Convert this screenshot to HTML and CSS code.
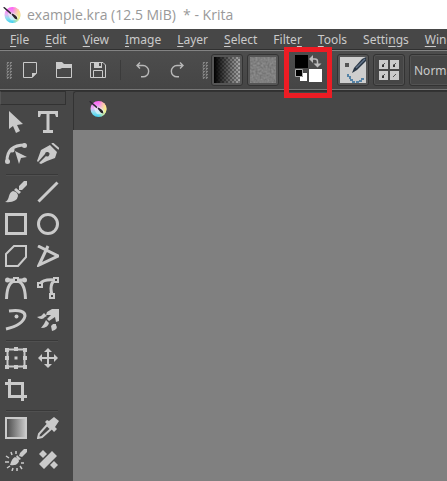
FILE: index.html
```html
<!DOCTYPE html>
<html lang="en">
<head>
<meta charset="utf-8">
<title>example.kra (12.5 MiB) * - Krita</title>
<link rel="stylesheet" href="styles.css">
</head>
<body>
<svg class="defs" aria-hidden="true">
  <defs>
    <linearGradient id="pinkCyan" x1="0" y1="0" x2="0" y2="1"><stop offset="0" stop-color="#ff5cf4"/><stop offset=".45" stop-color="#e8b4f4"/><stop offset=".7" stop-color="#8fe0f0"/><stop offset="1" stop-color="#3ccff0"/></linearGradient>
    <linearGradient id="yellow" x1="0" y1="0" x2="1" y2="0"><stop offset=".5" stop-color="#fff27a" stop-opacity="0"/><stop offset="1" stop-color="#fff27a"/></linearGradient>
    <linearGradient id="fade"><stop offset="0" stop-color="#474747"/><stop offset="1" stop-color="#cacaca"/></linearGradient>
    <symbol id="krita" viewBox="0 0 18 18">
      <circle cx="9.500" cy="9" r="8" fill="url(#pinkCyan)"/>
      <circle cx="9.500" cy="9" r="8" fill="url(#yellow)"/>
      <path d="M5 5.500Q11 6 15.500 11Q13 15 8 14Q5 11 5 5.500Z" fill="#fff" opacity=".5"/>
      <path d="M0 1.500L1.500 1L8.500 7L7.500 8.200Z" fill="#2b2630"/>
      <path d="M8.500 8.500L9.500 7.500L12.500 9.500Q14.500 10.500 14.300 13.500Q11.500 13.300 10.500 11Z" fill="#28232c"/>
    </symbol>
  </defs>
</svg>
<div class="window">
  <header class="titlebar">
    <svg class="logo"><use href="#krita"/></svg>
    <h1>example.kra (12.5 MiB)&nbsp; * - Krita</h1>
  </header>
  <nav class="menubar" aria-label="Main menu">
    <button><u>F</u>ile</button><button><u>E</u>dit</button><button><u>V</u>iew</button><button><u>I</u>mage</button><button><u>L</u>ayer</button><button><u>S</u>elect</button><button>Filte<u>r</u></button><button><u>T</u>ools</button><button>Setti<u>n</u>gs</button><button><u>W</u>indow</button>
  </nav>
  <div class="toolbar" role="toolbar" aria-label="Main toolbar">
    <span class="grip"></span>
    <button class="action" aria-label="New"><svg viewBox="0 0 16 16"><path d="M1.500.5H14.500V11L10 15.500H1.500Z" class="thin"/><path d="M10 16V11H15Z"/></svg></button>
    <button class="action" aria-label="Open"><svg viewBox="0 0 16 16"><path d="M0 0H6L8 2H16V6H6L4 7H0Z"/><path d="M.5 5V15.500H15.500V5" class="thin"/></svg></button>
    <button class="action" aria-label="Save"><svg viewBox="0 0 16 16"><path d="M.5.500H13L15.500 3V15.500H.5ZM3.500 15V8.500H12.500V15" class="thin"/><path d="M4 0H12V6H4ZM9 1V4H11V1Z" fill-rule="evenodd"/></svg></button>
    <span class="divider"></span>
    <button class="action" aria-label="Undo"><svg viewBox="0 0 16 16"><path d="M5 .5L2 3.500L5 6.500M2 3.500H8A5.500 5.500 0 0 1 8 14.800H6" class="curve"/></svg></button>
    <button class="action" aria-label="Redo"><svg viewBox="0 0 16 16"><path d="M11 .5L14 3.500L11 6.500M14 3.500H8A5.500 5.500 0 0 0 8 14.800H10" class="curve"/></svg></button>
    <span class="grip"></span>
    <button class="chooser" aria-label="Gradient"><span class="swatch gradient"></span></button>
    <button class="chooser" aria-label="Pattern"><svg viewBox="0 0 26 26"><filter id="noise" color-interpolation-filters="sRGB"><feTurbulence type="fractalNoise" baseFrequency=".5" numOctaves="2" seed="4"/><feColorMatrix values=".2 0 0 0 .4 .2 0 0 0 .4 .2 0 0 0 .4 0 0 0 0 1"/></filter><rect width="26" height="26" fill="#808080" filter="url(#noise)"/></svg></button>
    <div class="colors">
      <button aria-label="Foreground and background colors"><svg viewBox="0 0 28 28"><path d="M1 1H14V14H1Z" fill="#000"/><path d="M15 15H28V28H15Z" fill="#fff"/><path d="M9 19H13V27H6V23H9Z" fill="#fff"/><path d="M1.500 15.500H8.500V22.500H1.500Z" fill="#000" stroke="#aaa"/><path d="M18 5H21Q23.500 5 23.500 7.500V10" class="swap"/><path d="M15 5L19 1V9ZM19.500 9.500H27.500L23.500 13.500Z" class="light"/></svg></button>
      <span class="highlight"></span>
    </div>
    <button class="chooser" aria-label="Brush preset"><svg viewBox="0 0 26 26"><path d="M0 0H26V26H0Z" fill="#cecece"/><path d="M5 6H9V10H5Z" fill="#555"/><path d="M12 16L14 11L22 2L26 0V4L17 13Z" fill="#273443"/><path d="M16 11L25 2" stroke="#64748a" stroke-width="1.500"/><path d="M8 17V20H10V23H13V25H18V24H21V22H24" fill="none" stroke="#5683a6" stroke-width="2" stroke-dasharray="3 1"/></svg></button>
    <button class="chooser dark" aria-label="Choose brush preset"><svg viewBox="0 0 26 26"><path d="M3 3H12V12H3ZM14 3H23V12H14ZM3 14H12V23H3ZM14 14H23V23H14Z"/><path d="M6 9L9 6M17 9L20 6M6 20L9 17M17 20L20 17" stroke="#555" stroke-width="1"/><path d="M6 7.500H8V10H6ZM17 7.500H19V10H17ZM6 18.500H8V21H6Z" fill="#333"/></svg></button>
    <select class="blend" aria-label="Blending mode"><option>Normal</option></select>
  </div>
  <main class="workspace">
    <aside class="dock">
      <div class="dock-title"></div>
      <div class="tools">
        <button aria-label="Select shapes"><svg viewBox="0 0 22 22"><path d="M4 0L18 13L12 14L15 20L11 22L8 15L4 18Z"/></svg></button>
        <button aria-label="Text"><svg viewBox="0 0 22 22"><path d="M1 0H21V6H19L18 3H12.500V19H16V22H6V19H9.500V3H4L3 6H1Z"/></svg></button>
        <button aria-label="Edit shapes"><svg viewBox="0 0 22 22"><path d="M2 18Q2 2 20 2" class="stroke"/><circle cx="2.500" cy="18.500" r="2.500"/><circle cx="19.500" cy="2.500" r="2.500"/><circle cx="7" cy="7" r="2.500"/><path d="M10 8L22 14L16 15L14 21Z"/></svg></button>
        <button aria-label="Calligraphy"><svg viewBox="0 0 22 22"><path d="M13 2L20 9L18 15L10 18L4 21L2 20L9 13A2.200 2.200 0 1 0 8 11L1 19L0 18L4 7Z"/><path d="M15 0L22 6" class="line"/></svg></button>
      </div>
      <hr>
      <div class="tools">
        <button aria-label="Freehand brush"><svg viewBox="0 0 22 22"><path d="M14 5L19 0H22V4L17 9L14 9ZM11 7L16 11L14 13L9 9ZM8 10Q13 11 13 15Q12 22 0 21Q3 20 4 15Q5 11 8 10Z"/></svg></button>
        <button aria-label="Line"><svg viewBox="0 0 22 22"><path d="M1.500 20.500L20.500 1.500" class="stroke"/></svg></button>
        <button aria-label="Rectangle"><svg viewBox="0 0 22 22"><path d="M1.500 1.500H20.500V20.500H1.500Z" class="stroke"/></svg></button>
        <button aria-label="Ellipse"><svg viewBox="0 0 22 22"><circle cx="11" cy="11" r="9.500" class="stroke"/></svg></button>
        <button aria-label="Polygon"><svg viewBox="0 0 22 22"><path d="M1 9L9 1H21V12L13 21H1Z" class="line"/></svg></button>
        <button aria-label="Polyline"><svg viewBox="0 0 22 22"><path d="M1 1L21 11L2 20L11 1" class="stroke"/></svg></button>
        <button aria-label="Bezier curve"><svg viewBox="0 0 22 22"><path d="M1.500 22Q2 4 11 4Q20 4 20.500 22M2 3H20" class="stroke"/><circle cx="2.500" cy="3" r="2.500"/><circle cx="19.500" cy="3" r="2.500"/><path d="M9 1H13V5H9Z" class="node"/></svg></button>
        <button aria-label="Freehand path"><svg viewBox="0 0 22 22"><path d="M3 7Q6 2 18 3Q12 7 15 18" class="stroke"/><path d="M1 6H5V10H1ZM17 1H21V5H17ZM13 17H17V21H13Z" class="node"/></svg></button>
        <button aria-label="Dynamic brush"><svg viewBox="0 0 22 22"><path d="M4 2Q20 0 20 7Q18 16 1 20" class="stroke"/><circle cx="11.500" cy="7.500" r="2"/></svg></button>
        <button aria-label="Multibrush"><svg viewBox="0 0 22 22"><path d="M10 3L15 0H22V12L19 13L18 8L12 12L10 10L14 6L9 6Z"/><path d="M7 4L10 7L8 8Q5 12 0 8L4 7ZM9 11L12 14Q11 19 4 19L7 15ZM16 15H19V16Q22 20 15 22L14 17Z"/></svg></button>
      </div>
      <hr>
      <div class="tools">
        <button aria-label="Transform"><svg viewBox="0 0 22 22"><path d="M2.500 2.500H19.500V19.500H2.500Z" class="line"/><path d="M0 1H4V5H0ZM18 1H22V5H18ZM0 18H4V22H0ZM18 18H22V22H18ZM9 0H13V4H9ZM9 18H13V22H9ZM0 9H4V13H0ZM18 9H22V13H18ZM9.500 9.500H12.500V12.500H9.500Z"/></svg></button>
        <button aria-label="Move"><svg viewBox="0 0 22 22"><path d="M11 3V19M3 11H19" class="line"/><path d="M11 1L15 5H7ZM11 21L7 17H15ZM1 11L5 7V15ZM21 11L17 15V7Z"/></svg></button>
        <button aria-label="Crop"><svg viewBox="0 0 22 22"><path d="M4.500 0V17.500H22M0 4.500H17.500V22" class="stroke"/></svg></button>
      </div>
      <hr>
      <div class="tools">
        <button aria-label="Gradient tool"><svg viewBox="0 0 22 22"><path d="M1 1H21V21H1Z" fill="url(#fade)" stroke="#cacaca" stroke-width="2"/></svg></button>
        <button aria-label="Color sampler"><svg viewBox="0 0 22 22"><path d="M12 4L17 0L22 4L18 10L20 12L17 15L8 5L10 3Z"/><path d="M10 8L14 12L5 20L1 21L2 17Z" class="line"/></svg></button>
        <button aria-label="Colorize mask"><svg viewBox="0 0 22 22"><path d="M15 4L19 0H22V3L17 8L14 7ZM12 6L16 10L14 11L11 8ZM10 8Q16 11 13 14Q11 17 5 16Q7 9 10 8Z"/><path d="M0 13H4M1 7L4 9M6 3L7 6M11 2V5M2 19L5 17M7 22L8 19M12 22V19M17 20L15 17M19 14H16" class="ray"/></svg></button>
        <button aria-label="Smart patch"><svg viewBox="0 0 22 22"><path d="M15 2L20 7L7 20L2 15ZM2 5L6 1L10 5L6 9ZM13 16L17 12L21 16L17 20Z"/></svg></button>
      </div>
    </aside>
    <section class="document" aria-label="Document">
      <div class="tabs"><button class="tab" aria-label="example.kra"><svg class="logo"><use href="#krita"/></svg></button></div>
      <div class="canvas"></div>
    </section>
  </main>
</div>
</body>
</html>
```
FILE: styles.css
```css
* { box-sizing: border-box; }
body { margin: 0; background: #474747; font-family: "Noto Sans", sans-serif; font-size: 12px; color: #cacaca; }
button { margin: 0; padding: 0; border: 0; background: none; color: inherit; font: inherit; }
svg { display: block; fill: #cacaca; }
.defs { position: absolute; width: 0; height: 0; }
.window { display: flex; flex-direction: column; min-height: 100vh; overflow: hidden; }
.titlebar { display: flex; align-items: center; gap: 6px; height: 29px; padding: 0 3px; background: #fff; }
.logo { width: 18px; height: 18px; flex: none; }
.titlebar h1 { margin: 0; color: #999; font: 14px/20px "Open Sans", sans-serif; white-space: nowrap; }
.menubar { display: flex; height: 21px; padding: 0 2px; }
.menubar button { flex: none; padding: 0 8px; line-height: 20px; }
.menubar u { text-underline-offset: 2px; text-decoration-skip-ink: none; }
.toolbar { display: flex; align-items: center; height: 40px; padding-left: 6px; border-top: 1px solid #838383; border-bottom: 1px solid #777; box-shadow: 0 -1px #303030, 0 1px #303030; background: linear-gradient(#4d4d4d, #454545); }
.toolbar > * { flex: none; }
.grip { width: 6px; height: 17px; margin-right: 1px; background: conic-gradient(#858585 25%, #505050 0 50%, #606060 0 75%, #505050 0) 0 0 / 3px 3px; }
.action { width: 34px; height: 32px; }
.action svg { width: 16px; height: 16px; margin: auto; }
.divider { width: 1px; height: 20px; margin: 0 5px; background: #3b3b3b; }
.action + .grip { margin: 0 3px 0 8px; }
.thin { fill: none; stroke: #cacaca; }
.curve { fill: none; stroke: #b8b8b8; stroke-width: 1.4; }
.chooser { width: 32px; height: 32px; margin-right: 4px; padding: 2px; border: 1px solid #333; border-radius: 3px; background: #555; }
.chooser.dark { background: #464646; box-shadow: inset 0 0 0 1px #535353; }
.chooser svg, .swatch { width: 26px; height: 26px; }
.swatch { display: block; }
.gradient { background: linear-gradient(90deg, #000, transparent), conic-gradient(#aaa 25%, #777 0 50%, #aaa 0 75%, #777 0) 0 0 / 4px 4px; }
.colors { position: relative; margin: 0 15px 0 11px; }
.colors svg { width: 28px; height: 28px; }
.highlight { position: absolute; inset: -7px -10px -12px -10px; border: 5px solid #ed1c24; z-index: 1; pointer-events: none; }
.light { fill: #bbb; }
.swap { fill: none; stroke: #bbb; stroke-width: 1.5; }
.blend { appearance: none; width: 140px; height: 32px; padding: 0 4px; border: 1px solid #333; border-radius: 3px; background: #464646; box-shadow: inset 0 0 0 1px #535353; color: inherit; font: inherit; }
.workspace { display: flex; flex: 1; padding-top: 1px; }
.dock { width: 73px; flex: none; }
.dock-title { height: 14px; margin-right: 7px; border: 1px solid #323232; border-left-color: #555; }
.tools { display: grid; grid-template-columns: 32px 32px; grid-auto-rows: 32px; }
.dock-title + .tools { margin-top: 1px; }
.tools svg { width: 22px; height: 22px; margin: auto; }
.dock hr { height: 2px; margin: 4px 15px 0 6px; border: 0; border-top: 1px solid #393939; background: #505050; }
.stroke { fill: none; stroke: #cacaca; stroke-width: 3; }
.line { fill: none; stroke: #cacaca; stroke-width: 2; }
.ray { fill: none; stroke: #cacaca; stroke-width: 1.5; }
.node { fill: #474747; stroke: #cacaca; stroke-width: 2; }
.document { display: flex; flex: 1; flex-direction: column; min-width: 0; }
.tabs { height: 39px; border-top: 1px solid #333; border-left: 1px solid #333; border-radius: 3px 0 0; }
.tab { padding: 8px 15px; }
.canvas { flex: 1; background: #808080; }
```
